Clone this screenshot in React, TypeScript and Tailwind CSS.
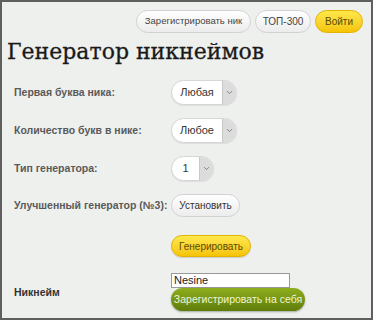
import { ChevronDown } from "lucide-react";

function Select({ value, width }: { value: string; width: string }) {
  return (
    <div className={`flex h-[25px] ${width} items-stretch overflow-hidden rounded-full border border-[#d6d6d6] bg-white shadow-[0_1px_1px_rgba(0,0,0,0.08)]`}>
      <span className="flex flex-1 items-center justify-center text-[11px] text-[#333]">{value}</span>
      <span className="flex w-[14px] items-center justify-center border-l border-[#c8c8c8] bg-[#dcdcdc]">
        <ChevronDown size={9} strokeWidth={2} className="text-[#666]" />
      </span>
    </div>
  );
}

function Row({ label, children }: { label: string; children: React.ReactNode }) {
  return (
    <div className="flex items-center">
      <span className="w-[157px] whitespace-nowrap text-[10.5px] font-bold text-[#5a5a5a]">{label}</span>
      {children}
    </div>
  );
}

export default function App() {
  return (
    <div className="h-[320px] w-[373px] overflow-hidden border-2 border-[#5f5f5f] bg-[#eef0ee] font-['Liberation_Sans',Arial,sans-serif]">
      <div className="flex justify-end gap-[4px] pr-[8px] pt-[8px]">
        <button className="h-[23px] w-[115px] whitespace-nowrap rounded-full border border-[#d2d2d2] bg-gradient-to-b from-white to-[#ececec] text-[9.5px] text-[#444]">
          Зарегистрировать ник
        </button>
        <button className="h-[23px] w-[56px] whitespace-nowrap rounded-full border border-[#d2d2d2] bg-gradient-to-b from-white to-[#ececec] text-[10px] text-[#444]">
          ТОП-300
        </button>
        <button className="h-[23px] w-[48px] whitespace-nowrap rounded-full border border-[#e2b400] bg-gradient-to-b from-[#ffe84a] to-[#f5c400] text-[10px] text-[#5a4a00]">
          Войти
        </button>
      </div>
      <h1 className="ml-[5px] mt-[4px] whitespace-nowrap font-['DejaVu_Serif',serif] text-[22px] leading-[30px] text-[#1a1a1a] [-webkit-text-stroke:0.3px_#1a1a1a]">
        Генератор никнеймов
      </h1>
      <div className="ml-[12px] mt-[13px] flex flex-col gap-[13px]">
        <Row label="Первая буква ника:">
          <Select value="Любая" width="w-[66px]" />
        </Row>
        <Row label="Количество букв в нике:">
          <Select value="Любое" width="w-[66px]" />
        </Row>
        <Row label="Тип генератора:">
          <Select value="1" width="w-[43px]" />
        </Row>
        <Row label="Улучшенный генератор (№3):">
          <button className="h-[23px] w-[69px] whitespace-nowrap rounded-full border border-[#d2d2d2] bg-gradient-to-b from-white to-[#ececec] text-[10px] text-[#333]">
            Установить
          </button>
        </Row>
        <div className="flex pl-[157px] pt-[5px]">
          <button className="h-[22px] w-[80px] whitespace-nowrap rounded-full border border-[#e2b400] bg-gradient-to-b from-[#ffe84a] to-[#f5c400] text-[10px] text-[#5a4a00] shadow-[0_1px_1px_rgba(0,0,0,0.15)]">
            Генерировать
          </button>
        </div>
        <div className="mt-[3px] flex items-end">
          <span className="mb-[10px] w-[157px] text-[10.5px] font-bold text-[#333]">Никнейм</span>
          <div className="flex flex-col">
            <input
              readOnly
              value="Nesine"
              className="h-[15px] w-[119px] border border-[#9a9a9a] bg-white px-[2px] text-[11px] text-[#222] outline-none"
            />
            <button className="h-[23px] w-[134px] whitespace-nowrap rounded-full bg-gradient-to-b from-[#8fae1e] to-[#5f7d0a] text-[10.5px] text-[#eef5d8] shadow-[0_1px_2px_rgba(0,0,0,0.3)]">
              Зарегистрировать на себя
            </button>
          </div>
        </div>
      </div>
    </div>
  );
}
